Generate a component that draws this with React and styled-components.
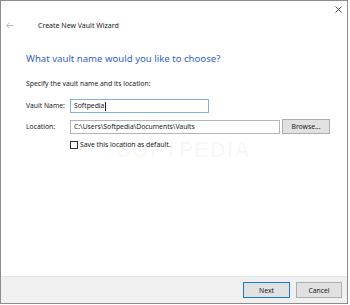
import styled, { createGlobalStyle } from 'styled-components';

// stili di base della pagina
const GlobalStyle = createGlobalStyle`
    html, body {
        margin: 0;
        padding: 0;
        background: #ffffff;
    }
    body {
        font-family: "Noto Sans", "Open Sans", sans-serif;
        color: #1a1a1a;
    }
`

const Window = styled.div`
    position: relative;
    width: 348px;
    height: 304px;
    box-sizing: border-box;
    border: 1px solid #8c8c8c;
    background: #ffffff;
    display: flex;
    flex-direction: column;
    overflow: hidden;
`
const TopBar = styled.div`
    height: 16px;
    display: flex;
    justify-content: flex-end;
    align-items: center;
    padding-right: 4px;
`
const CloseButton = styled.div`
    width: 9px;
    height: 9px;
    display: flex;
    align-items: center;
    justify-content: center;
`
const NavRow = styled.div`
    height: 16px;
    display: flex;
    align-items: center;
    padding-left: 5px;
    gap: 24px;
`
const WizardTitle = styled.div`
    font-size: 7px;
    color: #1a1a1a;
`
const Content = styled.div`
    padding-left: 25px;
    display: flex;
    flex-direction: column;
`
const Heading = styled.h1`
    margin: 19px 0 0 0;
    font-size: 9.6px;
    line-height: 14px;
    font-weight: normal;
    color: #2f63c6;
`
const Hint = styled.p`
    margin: 13px 0 0 0;
    font-size: 6.8px;
    line-height: 10px;
    color: #1a1a1a;
`
const Form = styled.div`
    margin-top: 10px;
    display: grid;
    grid-template-columns: 44px auto;
    row-gap: 6px;
    align-items: center;
`
const Label = styled.label`
    font-size: 6.8px;
    line-height: 14px;
`
const FieldRow = styled.div`
    display: flex;
    gap: 2px;
    align-items: center;
`
const TextBox = styled.div`
    width: ${p => p.width}px;
    height: 14px;
    box-sizing: border-box;
    border: 1px solid ${p => (p.focused ? '#7eb1e6' : '#b4b4b4')};
    padding-left: 3px;
    font-size: 6.8px;
    line-height: 12px;
    display: flex;
    align-items: center;
    white-space: nowrap;
    overflow: hidden;
`
const Caret = styled.span`
    display: inline-block;
    width: 1px;
    height: 9px;
    background: #1a1a1a;
    margin-left: 1px;
`
const Button = styled.div`
    width: ${p => p.width}px;
    height: ${p => p.height || 15}px;
    box-sizing: border-box;
    background: #e1e1e1;
    border: 1px solid ${p => (p.primary ? '#1a7bd6' : '#adadad')};
    font-size: 6.8px;
    display: flex;
    align-items: center;
    justify-content: center;
    color: #1a1a1a;
`
const CheckRow = styled.div`
    display: flex;
    align-items: center;
    gap: 2px;
    height: 9px;
`
const CheckBox = styled.span`
    width: 8px;
    height: 8px;
    box-sizing: border-box;
    border: 1px solid #333333;
    background: #ffffff;
`
const CheckLabel = styled.span`
    font-size: 6.8px;
`
const Watermark = styled.div`
    position: absolute;
    left: 115px;
    top: 136px;
    font-family: "Liberation Sans", sans-serif;
    font-size: 22px;
    font-weight: bold;
    letter-spacing: 1px;
    color: rgba(0, 0, 0, 0.03);
    pointer-events: none;
`
const Footer = styled.div`
    margin-top: auto;
    height: 27px;
    box-sizing: border-box;
    background: #f0f0f0;
    border-top: 1px solid #e6e6e6;
    display: flex;
    justify-content: flex-end;
    align-items: center;
    gap: 6px;
    padding-right: 5px;
`

function BackArrow() {
    return (
        <svg width="8" height="7" viewBox="0 0 8 7">
            <path d="M3.5 0.5 L0.8 3.5 L3.5 6.5 M0.8 3.5 H7.5" fill="none" stroke="#b0b0b0" strokeWidth="0.9" />
        </svg>
    )
}

function CloseIcon() {
    return (
        <svg width="7" height="7" viewBox="0 0 7 7">
            <path d="M0.5 0.5 L6.5 6.5 M6.5 0.5 L0.5 6.5" stroke="#333" strokeWidth="0.9" />
        </svg>
    )
}

export default function App() {
    return (
        <>
            <GlobalStyle />
            <Window>
                <TopBar>
                    <CloseButton><CloseIcon /></CloseButton>
                </TopBar>
                <NavRow>
                    <BackArrow />
                    <WizardTitle>Create New Vault Wizard</WizardTitle>
                </NavRow>
                <Content>
                    <Heading>What vault name would you like to choose?</Heading>
                    <Hint>Specify the vault name and its location:</Hint>
                    <Form>
                        <Label>Vault Name:</Label>
                        <FieldRow>
                            <TextBox width={139} focused>Softpedia<Caret /></TextBox>
                        </FieldRow>
                        <Label>Location:</Label>
                        <FieldRow>
                            <TextBox width={210}>C:\Users\Softpedia\Documents\Vaults</TextBox>
                            <Button width={48}>Browse...</Button>
                        </FieldRow>
                        <span />
                        <CheckRow>
                            <CheckBox />
                            <CheckLabel>Save this location as default.</CheckLabel>
                        </CheckRow>
                    </Form>
                </Content>
                <Watermark>SOFTPEDIA</Watermark>
                <Footer>
                    <Button width={47} height={16} primary>Next</Button>
                    <Button width={46} height={16}>Cancel</Button>
                </Footer>
            </Window>
        </>
    )
}
